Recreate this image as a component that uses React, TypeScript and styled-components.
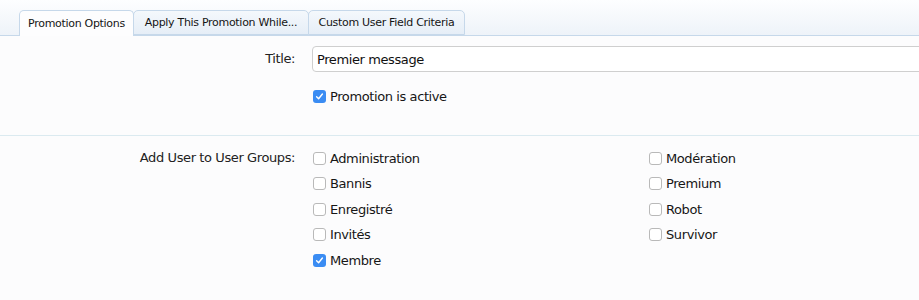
import { FC } from 'react';
import styled, { createGlobalStyle } from 'styled-components';

const GlobalStyle = createGlobalStyle({
  'html, body': {
    margin: 0,
    padding: 0,
    overflow: 'hidden',
    background: '#fcfcfd',
    fontFamily: '"DejaVu Sans", Verdana, sans-serif',
    color: '#1a1a1a',
  },
});

const Page = styled.div({
  width: 919,
  height: 300,
  overflow: 'hidden',
});

const TabBar = styled.div({
  display: 'flex',
  alignItems: 'flex-end',
  height: 35,
  paddingLeft: 19,
  background: 'linear-gradient(to bottom, #fdfeff 0%, #eef3f9 100%)',
  borderBottom: '1px solid #c6d8ea',
});

const Tab = styled.div<{ $active?: boolean }>(({ $active }) => ({
  boxSizing: 'border-box',
  display: 'flex',
  alignItems: 'center',
  justifyContent: 'center',
  height: $active ? 26 : 25,
  marginBottom: $active ? -1 : 0,
  border: '1px solid #c6d8ea',
  borderBottom: $active ? 'none' : '1px solid #c6d8ea',
  borderRadius: '5px 5px 0 0',
  marginRight: -1,
  background: $active
    ? '#fdfdfe'
    : 'linear-gradient(to bottom, #f4f8fc 0%, #e6eef7 100%)',
  fontSize: 11,
  letterSpacing: -0.3,
  color: '#151515',
  whiteSpace: 'nowrap',
}));

const Form = styled.div({
  paddingTop: 10,
});

const Row = styled.div({
  display: 'grid',
  gridTemplateColumns: '295px 1fr',
  columnGap: 17,
  alignItems: 'start',
});

const Label = styled.div<{ $top: number }>(({ $top }) => ({
  textAlign: 'right',
  fontSize: 13,
  letterSpacing: -0.4,
  paddingTop: $top,
  color: '#222',
}));

const TextInput = styled.input({
  boxSizing: 'border-box',
  width: 640,
  height: 26,
  border: '1px solid #cfcfcf',
  borderRadius: 4,
  padding: '0 4px',
  background: '#fff',
  fontFamily: 'inherit',
  fontSize: 13,
  letterSpacing: -0.4,
  color: '#111',
  outline: 'none',
});

const Divider = styled.div({
  height: 0,
  borderTop: '1px solid #dbeaf0',
  marginTop: 25,
});

const GroupsRow = styled(Row)({
  marginTop: 10,
});

const Options = styled.div({
  display: 'grid',
  gridTemplateColumns: '336px 1fr',
  gridAutoFlow: 'column',
  gridTemplateRows: 'repeat(5, 25.5px)',
});

const Item = styled.label({
  display: 'flex',
  alignItems: 'center',
  gap: 4,
  height: 25.5,
  fontSize: 13,
  letterSpacing: -0.4,
  color: '#161616',
});

const Box = styled.span<{ $checked?: boolean }>(({ $checked }) => ({
  boxSizing: 'border-box',
  display: 'inline-flex',
  alignItems: 'center',
  justifyContent: 'center',
  width: 13,
  height: 13,
  marginLeft: 1,
  borderRadius: 3,
  border: $checked ? 'none' : '1px solid #b9b9b9',
  background: $checked ? '#3a8cf3' : '#fff',
}));

const SingleRow = styled.div({
  paddingTop: 12,
});

const CheckBox: FC<{ checked?: boolean; label: string }> = ({
  checked,
  label,
}) => (
  <Item>
    <Box $checked={checked}>
      {checked && (
        <svg width="9" height="9" viewBox="0 0 9 9">
          <path
            d="M1.6 4.8 L3.6 6.8 L7.4 2"
            fill="none"
            stroke="#fff"
            strokeWidth="1.4"
            strokeLinecap="round"
            strokeLinejoin="round"
          />
        </svg>
      )}
    </Box>
    {label}
  </Item>
);

const groups = [
  { name: 'Administration' },
  { name: 'Bannis' },
  { name: 'Enregistré' },
  { name: 'Invités' },
  { name: 'Membre', checked: true },
  { name: 'Modération' },
  { name: 'Premium' },
  { name: 'Robot' },
  { name: 'Survivor' },
];

const App: FC = () => (
  <Page>
    <GlobalStyle />
    <TabBar>
      <Tab $active style={{ width: 115 }}>
        Promotion Options
      </Tab>
      <Tab style={{ width: 176 }}>Apply This Promotion While...</Tab>
      <Tab style={{ width: 157 }}>Custom User Field Criteria</Tab>
    </TabBar>

    <Form>
      <Row>
        <Label $top={5}>Title:</Label>
        <TextInput defaultValue="Premier message" />
      </Row>
      <Row>
        <div />
        <SingleRow>
          <CheckBox checked label="Promotion is active" />
        </SingleRow>
      </Row>

      <Divider />

      <GroupsRow>
        <Label $top={4}>Add User to User Groups:</Label>
        <Options>
          {groups.map(group => (
            <CheckBox
              key={group.name}
              checked={group.checked}
              label={group.name}
            />
          ))}
        </Options>
      </GroupsRow>
    </Form>
  </Page>
);

export default App;
